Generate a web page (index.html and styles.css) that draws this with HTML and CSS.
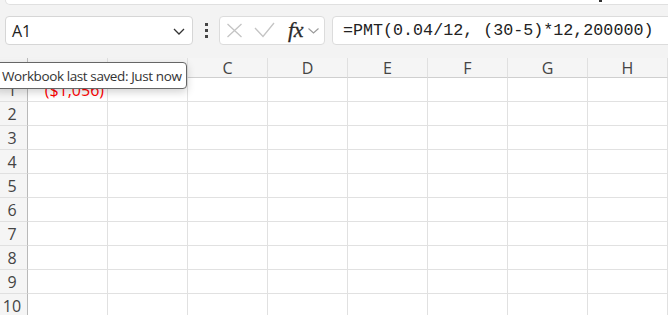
FILE: index.html
```html
<!DOCTYPE html>
<html>
<head>
<meta charset="utf-8">
<link rel="stylesheet" href="styles.css">
</head>
<body>
<div class="app">
  <div class="topbar"><div class="search"><span class="mark"></span></div></div>
  <div class="toolbar">
    <div class="namebox">
      <span class="ref">A1</span>
      <svg class="chev" width="12" height="7" viewBox="0 0 12 7"><polyline points="1,1 6,6 11,1" fill="none" stroke="#333" stroke-width="1.3"/></svg>
    </div>
    <div class="dots"><i></i><i></i><i></i></div>
    <div class="fbtns">
      <svg class="ic" width="17" height="15" viewBox="0 0 17 15"><path d="M1.5 1 L15.5 14 M15.5 1 L1.5 14" stroke="#c4c4c4" stroke-width="1.3" fill="none"/></svg>
      <svg class="ic" width="21" height="16" viewBox="0 0 21 16"><polyline points="1,6 9,14.5 20,1" fill="none" stroke="#c4c4c4" stroke-width="1.3"/></svg>
      <span class="fx">fx</span>
      <svg class="ic small" width="11" height="6" viewBox="0 0 11 6"><polyline points="0.5,0.5 5.5,5 10.5,0.5" fill="none" stroke="#9a9a9a" stroke-width="1.1"/></svg>
    </div>
    <div class="finput">=PMT(0.04/12, (30-5)*12,200000)</div>
  </div>
  <div class="sheet">
    <div class="hd corner"></div>
    <div class="hd col">A</div><div class="hd col">B</div><div class="hd col">C</div><div class="hd col">D</div><div class="hd col">E</div><div class="hd col">F</div><div class="hd col">G</div><div class="hd col">H</div>
    <div class="rh">1</div><div class="c neg">($1,056)</div><div class="c"></div><div class="c"></div><div class="c"></div><div class="c"></div><div class="c"></div><div class="c"></div><div class="c"></div>
    <div class="rh">2</div><div class="c"></div><div class="c"></div><div class="c"></div><div class="c"></div><div class="c"></div><div class="c"></div><div class="c"></div><div class="c"></div>
    <div class="rh">3</div><div class="c"></div><div class="c"></div><div class="c"></div><div class="c"></div><div class="c"></div><div class="c"></div><div class="c"></div><div class="c"></div>
    <div class="rh">4</div><div class="c"></div><div class="c"></div><div class="c"></div><div class="c"></div><div class="c"></div><div class="c"></div><div class="c"></div><div class="c"></div>
    <div class="rh">5</div><div class="c"></div><div class="c"></div><div class="c"></div><div class="c"></div><div class="c"></div><div class="c"></div><div class="c"></div><div class="c"></div>
    <div class="rh">6</div><div class="c"></div><div class="c"></div><div class="c"></div><div class="c"></div><div class="c"></div><div class="c"></div><div class="c"></div><div class="c"></div>
    <div class="rh">7</div><div class="c"></div><div class="c"></div><div class="c"></div><div class="c"></div><div class="c"></div><div class="c"></div><div class="c"></div><div class="c"></div>
    <div class="rh">8</div><div class="c"></div><div class="c"></div><div class="c"></div><div class="c"></div><div class="c"></div><div class="c"></div><div class="c"></div><div class="c"></div>
    <div class="rh">9</div><div class="c"></div><div class="c"></div><div class="c"></div><div class="c"></div><div class="c"></div><div class="c"></div><div class="c"></div><div class="c"></div>
    <div class="rh">10</div><div class="c"></div><div class="c"></div><div class="c"></div><div class="c"></div><div class="c"></div><div class="c"></div><div class="c"></div><div class="c"></div>
  </div>
  <div class="tooltip">Workbook last saved: Just now</div>
</div>
</body>
</html>
```
FILE: styles.css
```css
* { box-sizing: border-box; }
html, body { margin: 0; padding: 0; }
body {
  width: 668px;
  height: 315px;
  overflow: hidden;
  background: #f3f3f3;
  font-family: "Open Sans", "Noto Sans", sans-serif;
  color: #222;
}
.app { position: relative; width: 668px; height: 315px; overflow: hidden; }

.topbar { height: 6px; padding-left: 5px; }
.search {
  position: relative;
  height: 5px;
  width: 700px;
  background: #fff;
  border: 1px solid #e0e0e0;
  border-top: none;
  border-radius: 0 0 7px 7px;
}
.mark {
  position: absolute;
  left: 593px;
  top: 0;
  width: 3px;
  height: 2px;
  background: #333;
}

.toolbar {
  display: flex;
  align-items: center;
  height: 29px;
  margin-top: 10px;
  padding-left: 5px;
}
.namebox {
  width: 188px;
  height: 29px;
  flex: none;
  background: #fff;
  border: 1px solid #d6d6d6;
  border-radius: 4px;
  display: flex;
  align-items: center;
  justify-content: space-between;
  padding: 0 7px 0 6px;
}
.ref { font-size: 16px; color: #222; }
.chev { margin-top: 1px; }
.dots {
  width: 26px;
  flex: none;
  display: flex;
  flex-direction: column;
  align-items: center;
  gap: 3px;
}
.dots i { display: block; width: 3px; height: 3px; background: #444; }
.fbtns {
  width: 106px;
  height: 29px;
  flex: none;
  background: #fff;
  border: 1px solid #dcdcdc;
  border-radius: 4px;
  display: flex;
  align-items: center;
  padding-left: 6px;
}
.fbtns .ic { flex: none; }
.fbtns .ic:nth-child(2) { margin-left: 11px; margin-top: -2px; }
.fx {
  font-family: "Liberation Serif", "DejaVu Serif", serif;
  font-style: italic;
  font-size: 22px;
  color: #2a2a2a;
  margin-left: 13px;
  line-height: 1;
  margin-top: -2px;
  letter-spacing: -0.3px;
  -webkit-text-stroke: 0.3px #2a2a2a;
}
.fbtns .small { margin-left: 5px; margin-top: 1px; }
.finput {
  margin-left: 7px;
  flex: none;
  width: 400px;
  height: 29px;
  background: #fff;
  border: 1px solid #dcdcdc;
  border-radius: 4px;
  padding-left: 10px;
  display: flex;
  align-items: center;
  font-family: "Liberation Mono", "DejaVu Sans Mono", monospace;
  font-size: 16.7px;
  color: #222;
  white-space: nowrap;
}

.sheet {
  margin-top: 13px;
  display: grid;
  grid-template-columns: 28px repeat(8, 80px);
  grid-template-rows: 20px repeat(10, 24px);
  background: #fff;
}
.hd {
  background: #f5f5f5;
  border-right: 1px solid #e0e0e0;
  border-bottom: 1px solid #cfcfcf;
  font-size: 16px;
  color: #444;
  display: flex;
  align-items: center;
  justify-content: center;
  line-height: 1;
}
.hd.corner { border-right: 1px solid #bdbdbd; }
.rh {
  background: #f5f5f5;
  border-right: 1px solid #b9b9b9;
  border-bottom: 1px solid #e0e0e0;
  font-size: 16px;
  color: #444;
  display: flex;
  align-items: center;
  justify-content: center;
  padding-right: 3px;
  line-height: 1;
}
.c {
  border-right: 1px solid #e1e1e1;
  border-bottom: 1px solid #e1e1e1;
  font-size: 16px;
  display: flex;
  align-items: center;
  justify-content: flex-end;
  padding-right: 3px;
  line-height: 1;
}
.neg { color: #ff0000; }

.tooltip {
  position: absolute;
  left: -6px;
  top: 62px;
  width: 193px;
  height: 27px;
  background: #fff;
  border: 1px solid #666;
  border-radius: 4px;
  box-shadow: 0 3px 8px rgba(0,0,0,0.18);
  font-size: 13.5px;
  letter-spacing: -0.4px;
  color: #333;
  padding-left: 7px;
  display: flex;
  align-items: center;
  white-space: nowrap;
}
```
